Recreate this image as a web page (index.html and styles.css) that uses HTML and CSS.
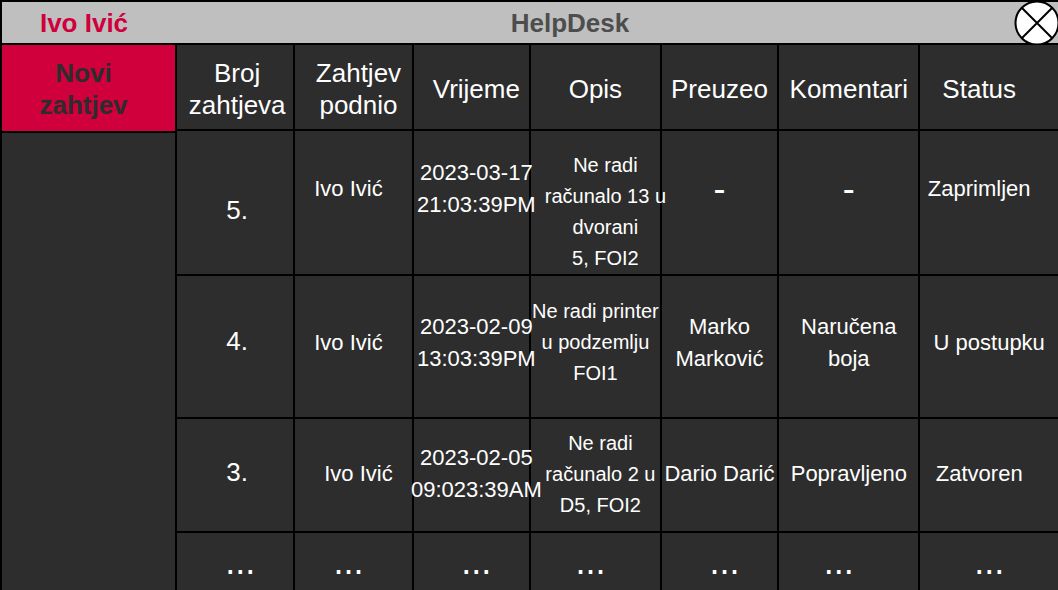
FILE: index.html
```html
<!DOCTYPE html>
<html lang="hr">
<head>
<meta charset="utf-8">
<title>HelpDesk</title>
<meta name="viewport" content="width=device-width, initial-scale=1">
<link rel="stylesheet" href="styles.css">
</head>
<body>
<div class="app">
  <header class="topbar">
    <span class="user">Ivo Ivić</span>
    <h1 class="title">HelpDesk</h1>
    <button class="close" type="button" aria-label="Zatvori">
      <svg viewBox="0 0 44 44" width="44" height="44" aria-hidden="true">
        <circle cx="23" cy="22" r="21.500" fill="#fff" stroke="#000" stroke-width="2"/>
        <path d="M8 7L38 37M38 7L8 37" stroke="#000" stroke-width="2" fill="none"/>
      </svg>
    </button>
  </header>
  <main class="content">
    <nav class="sidebar">
      <button class="new-request" type="button">Novi<br>zahtjev</button>
    </nav>
    <table class="requests">
      <colgroup>
        <col class="col-number"><col class="col-author"><col class="col-time"><col class="col-text"><col class="col-owner"><col class="col-comment"><col class="col-status">
      </colgroup>
      <thead>
        <tr class="row-head">
          <th scope="col" class="number">Broj<br>zahtjeva</th>
          <th scope="col" class="lean-right">Zahtjev<br>podnio</th>
          <th scope="col" class="lean-right">Vrijeme</th>
          <th scope="col">Opis</th>
          <th scope="col">Preuzeo</th>
          <th scope="col">Komentari</th>
          <th scope="col" class="lean-far-left">Status</th>
        </tr>
      </thead>
      <tbody>
        <tr class="row-tall">
          <td class="number">5.</td>
          <td class="lean-left">Ivo Ivić</td>
          <td class="lean-right"><div class="lines"><span>2023-03-17</span><span>21:03:39PM</span></div></td>
          <td class="description lean-far-right"><div class="lines"><span>Ne radi</span><span>računalo 13 u</span><span>dvorani</span><span>5, FOI2</span></div></td>
          <td class="mark">-</td>
          <td class="mark">-</td>
          <td class="lean-far-left">Zaprimljen</td>
        </tr>
        <tr class="row-medium">
          <td class="number">4.</td>
          <td class="lean-left">Ivo Ivić</td>
          <td class="lean-right"><div class="lines"><span>2023-02-09</span><span>13:03:39PM</span></div></td>
          <td class="description"><div class="lines"><span>Ne radi printer</span><span>u podzemlju</span><span>FOI1</span></div></td>
          <td>Marko<br>Marković</td>
          <td>Naručena<br>boja</td>
          <td>U postupku</td>
        </tr>
        <tr class="row-short">
          <td class="number">3.</td>
          <td class="lean-right">Ivo Ivić</td>
          <td class="lean-right"><div class="lines"><span>2023-02-05</span><span>09:023:39AM</span></div></td>
          <td class="description lean-right"><div class="lines"><span>Ne radi</span><span>računalo 2 u</span><span>D5, FOI2</span></div></td>
          <td>Dario Darić</td>
          <td>Popravljeno</td>
          <td class="lean-far-left">Zatvoren</td>
        </tr>
        <tr class="row-more">
          <td class="mark lean-right">...</td>
          <td class="mark lean-left">...</td>
          <td class="mark lean-right">...</td>
          <td class="mark lean-left">...</td>
          <td class="mark lean-right">...</td>
          <td class="mark lean-far-left">...</td>
          <td class="mark">...</td>
        </tr>
      </tbody>
    </table>
  </main>
</div>
</body>
</html>
```
FILE: styles.css
```css
* {
  box-sizing: border-box;
}

body {
  margin: 0;
  background: #2d2d2d;
  color: #fff;
  font-family: "Liberation Sans", Arial, sans-serif;
  font-size: 22px;
  line-height: 32px;
}

button {
  font: inherit;
  cursor: pointer;
}

.app {
  display: flex;
  flex-direction: column;
  min-height: 100vh;
  border-top: 2px solid #000;
  border-left: 2px solid #000;
}

.topbar {
  display: grid;
  grid-template-columns: 164px 1fr 44px;
  align-items: center;
  height: 43px;
  background: #bfbfbf;
  border-bottom: 2px solid #000;
  font-size: 26px;
  font-weight: bold;
  text-align: center;
}

.user {
  color: #cf003c;
}

.title {
  margin: 0;
  padding-right: 40px;
  color: #4d4d4d;
  font-size: 26px;
}

.close {
  display: flex;
  align-items: center;
  height: 41px;
  padding: 0;
  border: 0;
  background: none;
}

.close svg {
  flex: none;
}

.content {
  display: grid;
  grid-template-columns: 173px 1fr;
  flex: 1;
}

.new-request {
  display: block;
  width: 100%;
  padding: 12px 10px 10px 0;
  border: 0;
  border-bottom: 2px solid #000;
  background: #cf003c;
  color: #2d2d2d;
  font-size: 26px;
  font-weight: bold;
}

.requests {
  width: 100%;
  height: 100%;
  table-layout: fixed;
  border-spacing: 0;
}

.col-number,
.col-author {
  width: 13.4%;
}

.col-time,
.col-owner {
  width: 13.3%;
}

.col-text {
  width: 14.8%;
}

.col-comment {
  width: 16%;
}

.col-status {
  width: 15.8%;
}

.requests th,
.requests td {
  padding: 0;
  border-left: 2px solid #000;
  text-align: center;
  vertical-align: middle;
  white-space: nowrap;
}

.requests td {
  border-top: 2px solid #000;
}

.requests th {
  padding-top: 4px;
  font-size: 26px;
  font-weight: normal;
}

/* Centres each line, also when it is wider than its cell. */
.lines {
  display: flex;
  flex-direction: column;
  align-items: center;
}

.row-head {
  height: 84px;
}

.row-tall {
  height: 145px;
}

.row-medium {
  height: 143px;
}

.row-short {
  height: 114px;
}

.requests .row-tall td {
  padding-bottom: 28px;
}

.requests .row-tall .number {
  padding-top: 14px;
  padding-bottom: 0;
}

.requests .row-tall .description {
  padding-bottom: 0;
  vertical-align: bottom;
}

.requests .row-medium td {
  padding-bottom: 8px;
}

.requests .row-medium .number {
  padding-bottom: 12px;
}

.requests .row-short td {
  padding-bottom: 2px;
}

.requests .row-short .number {
  padding-bottom: 6px;
}

.requests .number {
  padding-left: 4px;
  font-size: 26px;
}

.requests .description {
  font-size: 20px;
  line-height: 31px;
}

.requests .mark {
  font-size: 36px;
}

.requests .lean-right {
  padding-left: 10px;
}

.requests .lean-left {
  padding-right: 10px;
}

.requests .lean-far-right {
  padding-left: 20px;
}

.requests .lean-far-left {
  padding-right: 20px;
}
```
